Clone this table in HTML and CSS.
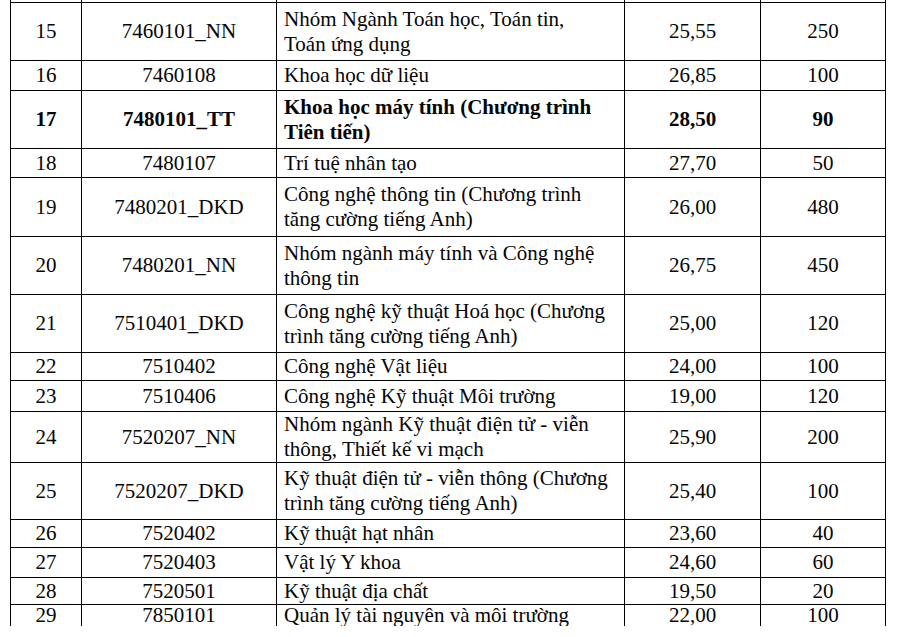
FILE: index.html
```html
<!DOCTYPE html>
<html lang="vi">
<head>
<meta charset="utf-8">
<title>Bảng điểm chuẩn</title>
<link rel="stylesheet" href="styles.css">
</head>
<body>
<div class="sheet">
<table class="scores">
<colgroup>
<col class="c-stt"><col class="c-code"><col class="c-name"><col class="c-score"><col class="c-quota">
</colgroup>
<tbody>
<tr class="cut"><td></td><td></td><td></td><td></td><td></td></tr>
<tr class="h58"><td class="ctr">15</td><td class="ctr">7460101_NN</td><td class="name">Nhóm Ngành Toán học, Toán tin,<br>Toán ứng dụng</td><td class="ctr">25,55</td><td class="ctr">250</td></tr>
<tr class="h30"><td class="ctr">16</td><td class="ctr">7460108</td><td class="name">Khoa học dữ liệu</td><td class="ctr">26,85</td><td class="ctr">100</td></tr>
<tr class="h58 bold"><td class="ctr">17</td><td class="ctr">7480101_TT</td><td class="name">Khoa học máy tính (Chương trình<br>Tiên tiến)</td><td class="ctr">28,50</td><td class="ctr">90</td></tr>
<tr class="h29"><td class="ctr">18</td><td class="ctr">7480107</td><td class="name">Trí tuệ nhân tạo</td><td class="ctr">27,70</td><td class="ctr">50</td></tr>
<tr class="h59"><td class="ctr">19</td><td class="ctr">7480201_DKD</td><td class="name">Công nghệ thông tin (Chương trình<br>tăng cường tiếng Anh)</td><td class="ctr">26,00</td><td class="ctr">480</td></tr>
<tr class="h58"><td class="ctr">20</td><td class="ctr">7480201_NN</td><td class="name">Nhóm ngành máy tính và Công nghệ<br>thông tin</td><td class="ctr">26,75</td><td class="ctr">450</td></tr>
<tr class="h58"><td class="ctr">21</td><td class="ctr">7510401_DKD</td><td class="name">Công nghệ kỹ thuật Hoá học (Chương<br>trình tăng cường tiếng Anh)</td><td class="ctr">25,00</td><td class="ctr">120</td></tr>
<tr class="h28"><td class="ctr">22</td><td class="ctr">7510402</td><td class="name">Công nghệ Vật liệu</td><td class="ctr">24,00</td><td class="ctr">100</td></tr>
<tr class="h31"><td class="ctr">23</td><td class="ctr">7510406</td><td class="name">Công nghệ Kỹ thuật Môi trường</td><td class="ctr">19,00</td><td class="ctr">120</td></tr>
<tr class="h50"><td class="ctr">24</td><td class="ctr">7520207_NN</td><td class="name">Nhóm ngành Kỹ thuật điện tử - viễn<br>thông, Thiết kế vi mạch</td><td class="ctr">25,90</td><td class="ctr">200</td></tr>
<tr class="h57"><td class="ctr">25</td><td class="ctr">7520207_DKD</td><td class="name">Kỹ thuật điện tử - viễn thông (Chương<br>trình tăng cường tiếng Anh)</td><td class="ctr">25,40</td><td class="ctr">100</td></tr>
<tr class="h28"><td class="ctr">26</td><td class="ctr">7520402</td><td class="name">Kỹ thuật hạt nhân</td><td class="ctr">23,60</td><td class="ctr">40</td></tr>
<tr class="h30"><td class="ctr">27</td><td class="ctr">7520403</td><td class="name">Vật lý Y khoa</td><td class="ctr">24,60</td><td class="ctr">60</td></tr>
<tr class="h27"><td class="ctr">28</td><td class="ctr">7520501</td><td class="name">Kỹ thuật địa chất</td><td class="ctr">19,50</td><td class="ctr">20</td></tr>
<tr class="h29 last"><td class="ctr">29</td><td class="ctr">7850101</td><td class="name">Quản lý tài nguyên và môi trường</td><td class="ctr">22,00</td><td class="ctr">100</td></tr>
</tbody>
</table>
</div>
</body>
</html>
```
FILE: styles.css
```css
html, body {
  margin: 0;
  padding: 0;
  background: #ffffff;
}

.sheet {
  height: 626px;
  overflow: hidden;
  padding-left: 10px;
}

.scores {
  border-collapse: collapse;
  table-layout: fixed;
  width: 876px;
  font-family: "Liberation Serif", "Times New Roman", serif;
  font-size: 21px;
  line-height: 25px;
  color: #050505;
}

.c-stt { width: 71px; }
.c-code { width: 195px; }
.c-name { width: 348px; }
.c-score { width: 136px; }
.c-quota { width: 125px; }

.scores td {
  border: 1px solid #000000;
  padding: 0 7px;
  vertical-align: middle;
  white-space: nowrap;
  overflow: hidden;
}

.scores .cut td {
  border-top: none;
  height: 2px;
  padding: 0;
}

.scores .last td {
  vertical-align: top;
  line-height: 21px;
}

.ctr { text-align: center; }
.name { text-align: left; }

.bold td { font-weight: bold; }

.h27 { height: 27px; }
.h28 { height: 28px; }
.h29 { height: 29px; }
.h30 { height: 30px; }
.h31 { height: 31px; }
.h50 { height: 50px; }
.h57 { height: 57px; }
.h58 { height: 58px; }
.h59 { height: 59px; }
```
